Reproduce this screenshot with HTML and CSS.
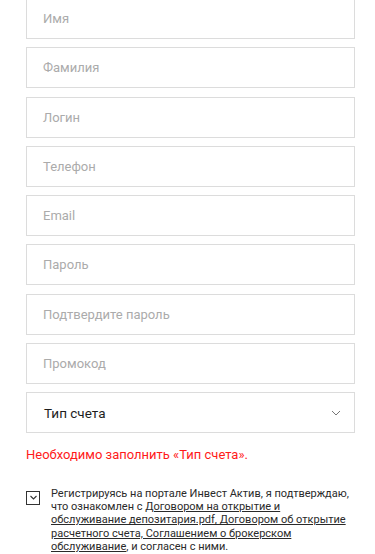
FILE: index.html
```html
<!DOCTYPE html>
<html lang="ru">
<head>
<meta charset="utf-8">
<link rel="stylesheet" href="styles.css">
</head>
<body>
<form class="form">
  <div class="field"><span class="ph">Имя</span></div>
  <div class="field"><span class="ph">Фамилия</span></div>
  <div class="field"><span class="ph">Логин</span></div>
  <div class="field"><span class="ph">Телефон</span></div>
  <div class="field"><span class="ph">Email</span></div>
  <div class="field"><span class="ph">Пароль</span></div>
  <div class="field"><span class="ph">Подтвердите пароль</span></div>
  <div class="field"><span class="ph">Промокод</span></div>
  <div class="field select">
    <span class="val">Тип счета</span>
    <svg class="chev" width="10" height="6" viewBox="0 0 10 6"><path d="M1 1 L5 5 L9 1" fill="none" stroke="#777" stroke-width="1"/></svg>
  </div>
  <div class="error">Необходимо заполнить «Тип счета».</div>
  <div class="agree">
    <span class="box"><svg width="11" height="11" viewBox="0 0 11 11"><path d="M2.5 4 L5.5 7 L8.5 4" fill="none" stroke="#333" stroke-width="1.1"/></svg></span>
    <p class="agree-text">Регистрируясь на портале Инвест Актив, я подтверждаю, что ознакомлен с <a href="#">Договором на открытие и обслуживание депозитария.pdf, Договором об открытие расчетного счета, Соглашением о брокерском обслуживание</a>, и согласен с ними.</p>
  </div>
</form>
</body>
</html>
```
FILE: styles.css
```css
html, body {
  margin: 0;
  padding: 0;
  background: #fff;
}
body {
  font-family: Roboto, "Liberation Sans", sans-serif;
  overflow: hidden;
}
.form {
  display: flex;
  flex-direction: column;
  padding: 0 20px 0 26px;
  margin-top: -2px;
}
.field {
  box-sizing: border-box;
  height: 41px;
  margin-bottom: 8.3px;
  border: 1px solid #dcdcdc;
  display: flex;
  align-items: center;
  padding: 0 16px;
}
.ph {
  font-size: 13px;
  color: #ababab;
}
.select {
  justify-content: space-between;
  padding-left: 17px;
}
.val {
  font-size: 13.5px;
  color: #1e1e1e;
}
.chev {
  margin-right: -3px;
}
.error {
  color: #ff1a1a;
  font-size: 13px;
  margin-top: 3px;
  line-height: 20px;
}
.agree {
  display: flex;
  margin-top: 22px;
  gap: 11px;
}
.box {
  box-sizing: border-box;
  width: 14px;
  height: 14px;
  border: 1px solid #333;
  flex: none;
  margin-top: 4px;
  display: flex;
  align-items: center;
  justify-content: center;
}
.box svg { display: block; }
.agree-text {
  margin: 0;
  font-size: 11px;
  line-height: 13.4px;
  color: #2a2a2a;
}
.agree-text a {
  color: #2a2a2a;
  text-decoration: underline;
}
```
